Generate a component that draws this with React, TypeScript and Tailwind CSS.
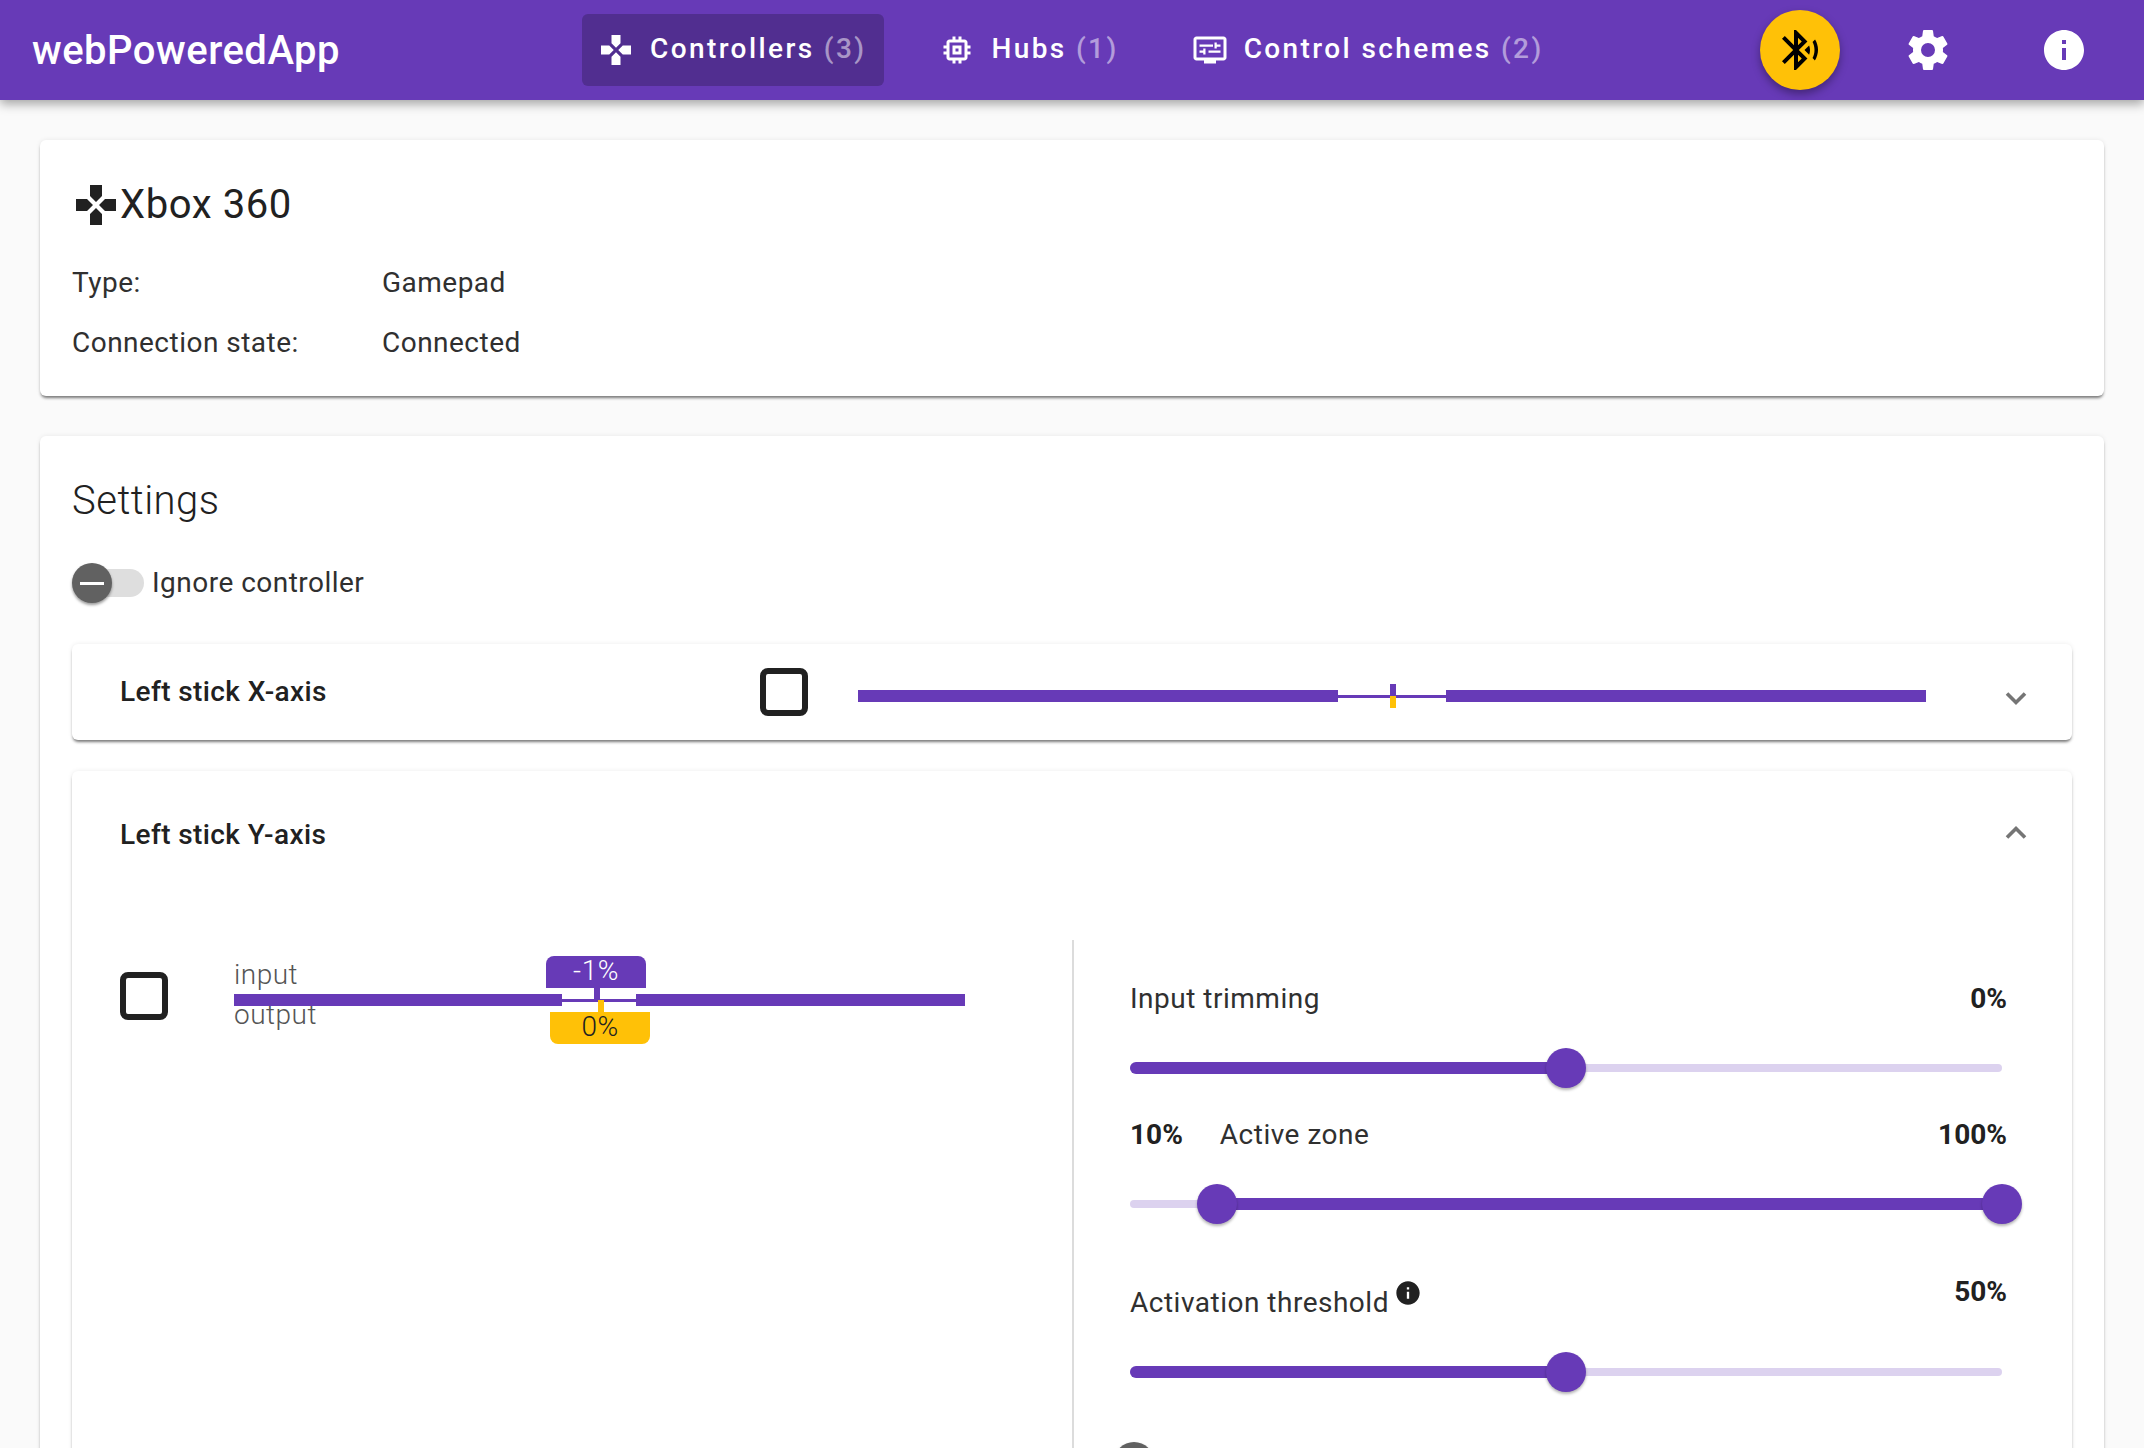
import type { ReactNode } from 'react';

const paths = {
  gamepad: 'M15 7.5V2H9v5.5l3 3 3-3zM7.5 9H2v6h5.5l3-3-3-3zM9 16.5V22h6v-5.5l-3-3-3 3zM16.5 9l-3 3 3 3H22V9h-5.5z',
  memory:
    'M15 9H9v6h6V9zm-2 4h-2v-2h2v2zm8-2V9h-2V7c0-1.1-.9-2-2-2h-2V3h-2v2h-2V3H9v2H7c-1.1 0-2 .9-2 2v2H3v2h2v2H3v2h2v2c0 1.1.9 2 2 2h2v2h2v-2h2v2h2v-2h2c1.1 0 2-.9 2-2v-2h2v-2h-2v-2h2zm-4 6H7V7h10v10z',
  schemes:
    'M21 3H3c-1.1 0-2 .9-2 2v12c0 1.1.9 2 2 2h5v2h8v-2h5c1.1 0 2-.9 2-2V5c0-1.1-.9-2-2-2zm0 14H3V5h18v12zM5 8.25h9v1.500H5v-1.500zm11.500 1.500H19v-1.500h-2.500V7H15v4h1.500V9.750zM5 12.250h2.500V11H9v4H7.500v-1.250H5v-1.500zm6 1.500h8v-1.500h-8v1.500z',
  bluetooth:
    'M14.240 12.010l2.320 2.320c.28-.72.44-1.510.44-2.330 0-.82-.16-1.590-.43-2.310l-2.330 2.320zm5.290-5.300l-1.260 1.260c.63 1.210.98 2.570.98 4.020s-.36 2.820-.98 4.020l1.200 1.200c.97-1.540 1.540-3.360 1.540-5.310-.01-1.890-.55-3.670-1.480-5.190zm-3.820 1L10 2H9v7.590L4.410 5 3 6.410 8.590 12 3 17.590 4.410 19 9 14.410V22h1l5.710-5.710-4.300-4.290 4.300-4.290zM11 5.830l1.880 1.880L11 9.590V5.830zm1.880 10.460L11 18.170v-3.760l1.880 1.880z',
  cog: 'M12,15.500A3.500,3.500 0 0,1 8.500,12A3.500,3.500 0 0,1 12,8.500A3.500,3.500 0 0,1 15.500,12A3.500,3.500 0 0,1 12,15.500M19.430,12.970C19.470,12.650 19.500,12.330 19.500,12C19.500,11.670 19.470,11.340 19.430,11L21.540,9.370C21.730,9.220 21.780,8.950 21.660,8.730L19.660,5.270C19.540,5.050 19.270,4.960 19.050,5.050L16.560,6.050C16.040,5.660 15.500,5.320 14.870,5.070L14.500,2.420C14.460,2.180 14.250,2 14,2H10C9.750,2 9.540,2.180 9.500,2.420L9.130,5.070C8.500,5.320 7.960,5.660 7.440,6.050L4.950,5.050C4.730,4.960 4.460,5.050 4.340,5.270L2.340,8.730C2.210,8.950 2.270,9.220 2.460,9.370L4.570,11C4.530,11.340 4.500,11.670 4.500,12C4.500,12.330 4.530,12.650 4.570,12.970L2.460,14.630C2.270,14.780 2.210,15.050 2.340,15.270L4.340,18.730C4.460,18.950 4.730,19.030 4.950,18.950L7.440,17.940C7.960,18.340 8.500,18.680 9.130,18.930L9.500,21.580C9.540,21.820 9.750,22 10,22H14C14.250,22 14.460,21.820 14.500,21.580L14.870,18.930C15.500,18.670 16.040,18.340 16.560,17.940L19.050,18.950C19.270,19.030 19.540,18.950 19.660,18.730L21.660,15.270C21.780,15.050 21.730,14.780 21.540,14.630L19.430,12.970Z',
  info: 'M12 2C6.480 2 2 6.480 2 12s4.480 10 10 10 10-4.480 10-10S17.520 2 12 2zm1 15h-2v-6h2v6zm0-8h-2V7h2v2z',
};

function Icon({ d, className }: { d: string; className: string }) {
  return (
    <svg viewBox="0 0 24 24" fill="currentColor" className={className}>
      <path d={d} />
    </svg>
  );
}

function Chevron({ up }: { up?: boolean }) {
  return (
    <svg viewBox="0 0 24 24" fill="none" stroke="#757575" strokeWidth="2.4" className="h-9 w-9">
      <path d={up ? 'M6 15l6-6 6 6' : 'M6 9l6 6 6-6'} />
    </svg>
  );
}

function NavTab({ icon, label, count, active }: { icon: string; label: string; count: string; active?: boolean }) {
  return (
    <div
      className={`flex h-[72px] items-center gap-4 rounded-[6px] pl-4 pr-[18px] text-[28px] font-medium tracking-[2.4px] ${
        active ? 'bg-[#512e90]' : ''
      }`}
    >
      <Icon d={icon} className="h-9 w-9" />
      <span className="mb-[2px]">
        {label} <span className="text-white/50">{count}</span>
      </span>
    </div>
  );
}

// one thumb + filled part of a slider, positions given in percent of the track
function Slider({ from, to }: { from: number; to: number }) {
  return (
    <div className="relative h-10">
      <div className="absolute inset-x-0 top-4 h-2 rounded-full bg-[#dcd2ef]" />
      <div
        className="absolute top-[14px] h-3 rounded-full bg-[#673ab7]"
        style={{ left: `${from}%`, width: `${to - from}%` }}
      />
      {[from, to].map((pos) =>
        pos === 0 ? null : (
          <div
            key={pos}
            className="absolute top-0 -ml-5 h-10 w-10 rounded-full bg-[#673ab7] shadow-[0_2px_3px_rgba(0,0,0,0.3)]"
            style={{ left: `${pos}%` }}
          />
        ),
      )}
    </div>
  );
}

function Card({ children, className }: { children: ReactNode; className: string }) {
  return (
    <div className={`rounded-[6px] bg-white shadow-[0_3px_3px_-1px_rgba(0,0,0,0.5),0_0_5px_rgba(0,0,0,0.08)] ${className}`}>
      {children}
    </div>
  );
}

function Switch() {
  return (
    <div className="relative h-10 w-[72px] shrink-0">
      <div className="absolute left-[3px] top-[6px] h-7 w-[69px] rounded-full bg-[#dedede]" />
      <div className="absolute left-0 top-0 flex h-10 w-10 items-center justify-center rounded-full bg-[#616161] shadow-[0_2px_3px_rgba(0,0,0,0.4)]">
        <div className="h-[3px] w-6 bg-white" />
      </div>
    </div>
  );
}

export default function App() {
  return (
    <div className="h-[1448px] overflow-hidden bg-[#fafafa] font-['Roboto',sans-serif] text-[#212121]">
      <header className="relative z-10 flex h-[100px] items-center bg-[#673ab7] pl-8 pr-[56px] text-white shadow-[0_4px_10px_rgba(0,0,0,0.35)]">
        <h1 className="w-[550px] pt-[2px] text-[40px] font-medium tracking-[0.5px]">webPoweredApp</h1>
        <nav className="flex items-center gap-[39px]">
          <NavTab icon={paths.gamepad} label="Controllers" count="(3)" active />
          <NavTab icon={paths.memory} label="Hubs" count="(1)" />
          <NavTab icon={paths.schemes} label="Control schemes" count="(2)" />
        </nav>
        <div className="ml-auto flex items-center">
          <div className="flex h-20 w-20 items-center justify-center rounded-full bg-[#ffc107] text-black shadow-[0_4px_8px_rgba(0,0,0,0.35)]">
            <Icon d={paths.bluetooth} className="h-12 w-12" />
          </div>
          <Icon d={paths.cog} className="ml-[64px] h-12 w-12" />
          <Icon d={paths.info} className="ml-[88px] h-12 w-12" />
        </div>
      </header>

      <main className="flex flex-col gap-10 px-10 pt-10">
        <Card className="h-[256px] px-8 pt-[45px]">
          <div className="flex h-10 items-center text-[40px] font-normal tracking-[0.6px]">
            <Icon d={paths.gamepad} className="h-12 w-12" />
            <span>Xbox 360</span>
          </div>
          <dl className="mt-[42px] grid grid-cols-[310px_1fr] gap-y-[28px] text-[28px] leading-[32px] tracking-[0.48px] text-[#303030]">
            <dt>Type:</dt>
            <dd>Gamepad</dd>
            <dt>Connection state:</dt>
            <dd>Connected</dd>
          </dl>
        </Card>

        <Card className="h-[1100px] px-8 pt-10">
          <h2 className="text-[40px] leading-[50px] font-light tracking-[0.5px]">Settings</h2>
          <div className="mt-9 flex items-center gap-2 text-[28px] tracking-[0.48px] text-[#303030]">
            <Switch />
            <span>Ignore controller</span>
          </div>

          <Card className="mt-10 flex h-[96px] items-center pl-12 pr-[38px]">
            <span className="w-[640px] text-[28px] font-medium tracking-[0.4px]">Left stick X-axis</span>
            <div className="h-12 w-12 rounded-[8px] border-[6px] border-[#212121]" />
            <div className="relative ml-[50px] mt-2 flex h-6 w-[1068px] items-center">
              <div className="h-3 w-[480px] bg-[#673ab7]" />
              <div className="h-[3px] w-[108px] bg-[#673ab7]" />
              <div className="h-3 w-[480px] bg-[#673ab7]" />
              <div className="absolute left-[532px] top-0 h-3 w-[6px] bg-[#673ab7]" />
              <div className="absolute left-[532px] top-3 h-3 w-[6px] bg-[#ffc107]" />
            </div>
            <div className="ml-auto translate-y-[6px]">
              <Chevron />
            </div>
          </Card>

          <Card className="mt-[31px] h-[800px] pl-12 pr-[38px]">
            <div className="flex h-[124px] items-center justify-between">
              <span className="pt-[3px] text-[28px] font-medium tracking-[0.4px]">Left stick Y-axis</span>
              <Chevron up />
            </div>
            <div className="mt-[45px] flex">
              <div className="flex h-[660px] w-[954px] shrink-0 border-r-2 border-[#dcdcdc]">
                <div className="mt-[32px] h-12 w-12 rounded-[8px] border-[6px] border-[#212121]" />
                <div className="relative ml-[66px] h-[110px] w-[731px] text-[28px] font-light tracking-[0.5px] text-[#555]">
                  <span className="absolute left-0 top-[17px] leading-[36px]">input</span>
                  <span className="absolute left-0 top-[57px] leading-[36px]">output</span>
                  <div className="absolute inset-x-0 top-[54px] flex items-center">
                    <div className="h-3 w-[328px] bg-[#673ab7]" />
                    <div className="h-[3px] w-[74px] bg-[#673ab7]" />
                    <div className="h-3 w-[329px] bg-[#673ab7]" />
                  </div>
                  <div className="absolute left-[312px] top-[16px] flex h-8 w-[100px] items-center justify-center rounded-t-[8px] bg-[#673ab7] pb-[2px] text-[28px] font-light text-white">
                    -1%
                  </div>
                  <div className="absolute left-[360px] top-[48px] h-3 w-[6px] bg-[#673ab7]" />
                  <div className="absolute left-[364px] top-[60px] h-3 w-[6px] bg-[#ffc107]" />
                  <div className="absolute left-[316px] top-[72px] flex h-8 w-[100px] items-center justify-center rounded-b-[8px] bg-[#ffc107] pb-[2px] text-[28px] font-light text-[#212121]">
                    0%
                  </div>
                </div>
              </div>

              <div className="w-[933px] shrink-0 pl-[56px] text-[28px] tracking-[0.5px]">
                <div className="mt-[41px] flex h-9 items-center justify-between">
                  <span className="font-normal text-[#303030]">Input trimming</span>
                  <b className="font-bold tracking-normal">0%</b>
                </div>
                <div className="mt-[31px] w-[872px]">
                  <Slider from={0} to={50} />
                </div>

                <div className="mt-[29px] flex h-9 items-center">
                  <b className="font-bold tracking-normal">10%</b>
                  <span className="ml-[37px] text-[#303030]">Active zone</span>
                  <b className="ml-auto font-bold tracking-normal">100%</b>
                </div>
                <div className="mt-[31px] w-[872px]">
                  <Slider from={10} to={100} />
                </div>

                <div className="mt-[51px] flex items-start">
                  <span className="mt-[10px] leading-9 text-[#303030]">Activation threshold</span>
                  <Icon d={paths.info} className="ml-[5px] mt-1 h-7 w-7" />
                  <b className="ml-auto -mt-1 font-bold tracking-normal">50%</b>
                </div>
                <div className="mt-[31px] w-[872px]">
                  <Slider from={0} to={50} />
                </div>

                <div className="mt-[50px] -ml-4">
                  <Switch />
                </div>
              </div>
            </div>
          </Card>
        </Card>
      </main>
    </div>
  );
}
